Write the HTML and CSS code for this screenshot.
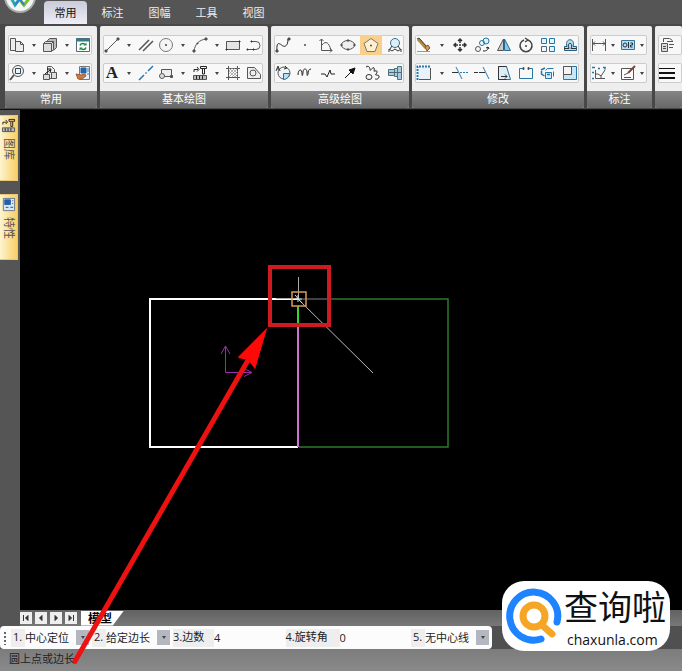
FILE: index.html
```html
<!DOCTYPE html>
<html lang="zh-CN">

<head>
    <meta charset="utf-8">
    <title>模型</title>
    <link rel="stylesheet" href="styles.css">
</head>

<body>
    <header class="menu">
        <svg class="appLogo" viewBox="0 0 40 24">
            <circle cx="20" cy="-3" r="15" fill="#f4f6f4" stroke="#aaa" stroke-width="2" />
            <path d="M10 -4l5 9 6-8" fill="none" stroke="#2aa9b5" stroke-width="3" />
            <path d="M19 -1l5 6 7-9" fill="none" stroke="#7cbb35" stroke-width="3" />
            <path d="M15 5l5-6 4 6" fill="none" stroke="#2d83c9" stroke-width="2" />
        </svg>
        <button class="menuTab active">常用</button>
        <button class="menuTab">标注</button>
        <button class="menuTab">图幅</button>
        <button class="menuTab">工具</button>
        <button class="menuTab">视图</button>
    </header>

    <div class="ribbon">
        <!-- common -->
        <section class="group common">
            <div class="tools">
                <button class="tool" aria-label="复制"><svg viewBox="0 0 16 16"><path d="M1.500 1.500h5v12h-5zM6.500 4.500h5l3 3v7h-8zM11.500 4.500v3h3" fill="#eee" /></svg></button>
                <button class="drop" aria-label="更多"></button>
                <button class="tool" aria-label="粘贴"><svg viewBox="0 0 16 16"><path d="M5.500 5.500v-2l2-2h7v9l-3 3" fill="#bbb" /><path d="M1.500 6.500l2-2h8v8l-2 2h-8zM1.500 6.500h8v8M9.500 6.500l2-2" fill="#ddd" /></svg></button>
                <button class="drop" aria-label="更多"></button>
                <button class="tool" aria-label="刷新"><svg viewBox="0 0 16 16"><path d="M1.500 1.500h13v13h-13z" fill="#fff" stroke="#567" /><path d="M1 3h14" stroke="#397b83" stroke-width="3" /><path d="M5 8.500c1-3 4-2 5-1M11 10.500c-1 3-4 2-5 1" stroke="#168b43" stroke-width="1.500" /><path d="M11.500 5.500v3h-3zM4.500 13.500v-3h3z" fill="#168b43" stroke="none" /></svg></button>
            </div>
            <div class="tools">
                <button class="tool" aria-label="缩放"><svg viewBox="0 0 16 16"><circle cx="9" cy="6" r="5.500" fill="#eef3f6" /><path d="M6.500 3.500h5v5h-5z" stroke="#345" /><path d="M5 10l-4 5" stroke-width="2" /></svg></button>
                <button class="drop" aria-label="更多"></button>
                <button class="tool" aria-label="平移"><svg viewBox="0 0 16 16"><path d="M5.500 1.500h4l3 3v9h-7z" fill="#eee" /><path d="M1.500 9.500h6v5h-6zM9.500 7.500h5v6h-5z" fill="#ddd" /><path d="M3 9l5-4M5 4l4 0-1 4" stroke="#111" /></svg></button>
                <button class="drop" aria-label="更多"></button>
                <button class="tool" aria-label="属性"><svg viewBox="0 0 16 16"><path d="M4.500 1.500h10v13h-10z" fill="#e8f1fb" stroke="#777" /><path d="M6 3h5v5H6z" fill="#2464a8" stroke="#2464a8" /><path d="M12 4h2M12 6h2M12 9h2" stroke="#4c79a8" /><path d="M1 9l5 1 4-1 1 2-4 3H3z" fill="#c57b43" stroke="#a45c32" /></svg></button>
            </div>
            <h2 class="groupName">常用</h2>
        </section>

        <!-- basic drawing -->
        <section class="group basic">
            <div class="tools">
                <button class="tool" aria-label="直线"><svg viewBox="0 0 16 16"><path d="M2 14L14 2" /><path d="M1 13h2v2H1zM13 1h2v2h-2z" fill="#444" /></svg></button>
                <button class="drop" aria-label="更多"></button>
                <button class="tool" aria-label="平行线"><svg viewBox="0 0 16 16"><path d="M1 13L11 3M5 14L15 4" stroke-width="1.500" /></svg></button>
                <button class="tool" aria-label="圆"><svg viewBox="0 0 16 16"><circle cx="8" cy="8" r="6.500" fill="#f4f4f4" stroke="#777" /><path d="M7.500 7.500h1v1h-1z" fill="#333" /></svg></button>
                <button class="drop" aria-label="更多"></button>
                <button class="tool" aria-label="圆弧"><svg viewBox="0 0 16 16"><path d="M2 14C3 7 7 3 14 2" /><path d="M1 13h2v2H1zM5 6h1v1H5zM13 1h2v2h-2z" fill="#444" /></svg></button>
                <button class="drop" aria-label="更多"></button>
                <button class="tool" aria-label="矩形"><svg viewBox="0 0 16 16"><path d="M1.500 4.500h13v8h-13z" fill="#e5e5e5" /><path d="M1 12h1v1H1zM14 4h1v1h-1z" fill="#333" stroke="#333" /></svg></button>
                <button class="tool" aria-label="多段线"><svg viewBox="0 0 16 16"><path d="M6 4.500h4a4 4 0 0 1 0 8H7M7 12.500H2" /><path d="M5 4h1v1H5zM1 12h1v1H1zM7 12h1v1H7z" fill="#333" stroke="#333" /></svg></button>
            </div>
            <div class="tools">
                <button class="tool letter" aria-label="文字">A</button>
                <button class="drop" aria-label="更多"></button>
                <button class="tool" aria-label="中心线"><svg viewBox="0 0 16 16"><path d="M1 15l5-5M7.500 8.500l1-1M10 6l5-5" stroke="#2478b5" stroke-width="1.500" /></svg></button>
                <button class="tool" aria-label="引线"><svg viewBox="0 0 16 16"><path d="M3.500 8V4.500h10v7h-7" fill="#eee" /><circle cx="4" cy="11" r="2.500" fill="#ddd" /><path d="M12.500 10.500h2v2h-2z" fill="#555" /></svg></button>
                <button class="drop" aria-label="更多"></button>
                <button class="tool" aria-label="图库"><svg viewBox="0 0 16 16"><path d="M1.500 10.500h13v4h-13z" fill="#bbb" /><path d="M4.500 11v3M7.500 11v3M10.500 11v3M2 7V4.500h4M5 2l2 2.500-2 2M8.500 1.500h6v2h-6zM10.500 4v5h2V4" stroke="#222" /></svg></button>
                <button class="drop" aria-label="更多"></button>
                <button class="tool" aria-label="剖面线"><svg viewBox="0 0 16 16"><path d="M3.500 1v14M12.500 1v14M1 3.500h14M1 12.500h14" /><path d="M4 6l3-3M4 9l6-6M4 12l9-9M7 12l6-6M10 12l3-3M4 3l9 9M7 3l6 6M4 6l6 6" stroke="#999" stroke-width=".7" /></svg></button>
                <button class="tool" aria-label="轮廓线"><svg viewBox="0 0 16 16"><path d="M1.500 2.500h7l6 7v4h-13z" fill="#eee" /><circle cx="7" cy="8" r="3" /></svg></button>
            </div>
            <h2 class="groupName">基本绘图</h2>
        </section>

        <!-- advanced drawing -->
        <section class="group advanced">
            <div class="tools">
                <button class="tool" aria-label="样条"><svg viewBox="0 0 16 16"><path d="M2 14C1 2 6 8 8 9s5 0 5-7" stroke="#222" /><path d="M1 13h2v2H1zM13 1h2v2h-2z" fill="#333" /></svg></button>
                <button class="tool" aria-label="点"><svg viewBox="0 0 16 16"><path d="M7.500 7.500h1v1h-1z" fill="#777" /></svg></button>
                <button class="tool" aria-label="公式曲线"><svg viewBox="0 0 16 16"><path d="M3.500 2v11.500H14M1.500 4l2-2 2 2M12 11.500l2 2-2 2M4 8c4-5 7-2 9 5" /></svg></button>
                <button class="tool" aria-label="椭圆"><svg viewBox="0 0 16 16"><ellipse cx="8" cy="8" rx="6.500" ry="4.500" fill="#eee" /><path d="M1 7h1v2H1zM14 7h1v2h-1zM7 3h2v1H7zM7 12h2v1H7z" fill="#333" /></svg></button>
                <button class="tool selected" aria-label="正多边形"><svg viewBox="0 0 16 16"><path d="M8 1.500l7 5-3 8H4l-3-8z" fill="#fff0cf" stroke="#777" /><path d="M7.500 8h1v1h-1z" fill="#333" /></svg></button>
                <button class="tool" aria-label="局部放大"><svg viewBox="0 0 16 16"><circle cx="8" cy="6" r="4.500" fill="#dceef8" stroke="#3d7189" /><path d="M5 9l-2 3M11 9l2 3M2 15v-3l3 2 3-2 3 2 3-2v3" stroke="#333" /></svg></button>
            </div>
            <div class="tools">
                <button class="tool" aria-label="圆形"><svg viewBox="0 0 16 16"><circle cx="9" cy="8" r="6" fill="#eef6fa" /><path d="M8.500 8.500h6c0 3-3 6-6 6z" fill="#b7dff4" stroke="#256b96" /><path d="M1 6l2-5 2 5M2 4h2M10 1l2 2-3 1" stroke="#333" /></svg></button>
                <button class="tool" aria-label="波浪线"><svg viewBox="0 0 16 16"><path d="M1 10c0-6 4-7 4-1 0 3 1 1 1-2 0-4 4-4 4 0 0 3 0 5 1 2 0-3 1-5 3-5" stroke="#222" /></svg></button>
                <button class="tool" aria-label="双折线"><svg viewBox="0 0 16 16"><path d="M1 9h4l2 3 3-7 1 4h4" stroke="#222" /></svg></button>
                <button class="tool" aria-label="箭头"><svg viewBox="0 0 16 16"><path d="M3 13l6-6" stroke="#111" /><path d="M13 3l-2 6-4-4z" fill="#111" stroke="#111" /></svg></button>
                <button class="tool" aria-label="齿轮"><svg viewBox="0 0 16 16"><path d="M1 2c3-2 4 1 4 3s3-4 4-2-1 4 1 3 3 1 1 3 4 0 3 3-3 2-4 2" stroke="#222" /><ellipse cx="4" cy="12" rx="3" ry="2.500" stroke="#333" /></svg></button>
                <button class="tool" aria-label="轴"><svg viewBox="0 0 16 16"><path d="M1.500 4.500h6v6h-6zM7.500 3.500h3v8h-3zM10.500 1.500h4v13h-4z" fill="#a7cbe0" stroke="#477" /><path d="M1 7.500h14" stroke="#567" /></svg></button>
            </div>
            <h2 class="groupName">高级绘图</h2>
        </section>

        <!-- modify -->
        <section class="group modify">
            <div class="tools">
                <button class="tool" aria-label="删除"><svg viewBox="0 0 16 16"><path d="M2 2l8 9" stroke="#b38b35" stroke-width="3" /><path d="M1 2l2-1 8 9" stroke="#333" /><path d="M9 10l3-2 2 3-3 3z" fill="#d89551" stroke="#855629" /><path d="M1 14.500h13" stroke="#999" /></svg></button>
                <button class="drop" aria-label="更多"></button>
                <button class="tool" aria-label="移动"><svg viewBox="0 0 16 16"><path d="M8 2v4M8 10v4M2 8h4M10 8h4M6 4l2-2 2 2M6 12l2 2 2-2M4 6L2 8l2 2M12 6l2 2-2 2M7 8h2" stroke="#333" stroke-width="1.500" /></svg></button>
                <button class="tool" aria-label="平移复制"><svg viewBox="0 0 16 16"><circle cx="12" cy="4" r="3" fill="#dff0fa" stroke="#2676a6" /><circle cx="8" cy="6" r="2.500" stroke="#2676a6" /><circle cx="4" cy="12" r="2.500" /><path d="M9 14c4 0 5-1 5-4M12 11l2-1 1 2" stroke="#222" /></svg></button>
                <button class="tool" aria-label="镜像"><svg viewBox="0 0 16 16"><path d="M7.500 2v11.500h-6z" fill="#ccc" /><path d="M8.500 2v11.500h6z" fill="#91c2df" stroke="#286d98" /></svg></button>
                <button class="tool" aria-label="旋转"><svg viewBox="0 0 16 16"><path d="M10 3a6 6 0 1 1-4 0M7 1l3 2-3 2" stroke="#444" stroke-width="1.500" /><path d="M7.500 8.500h1v1h-1z" fill="#222" /></svg></button>
                <button class="tool" aria-label="阵列"><svg viewBox="0 0 16 16"><path d="M1.500 1.500h5v5h-5zM9.500 1.500h5v5h-5zM9.500 9.500h5v5h-5z" fill="#e4f4fc" stroke="#2676a6" /><path d="M1.500 9.500h5v5h-5z" stroke="#496778" /></svg></button>
                <button class="tool" aria-label="偏移"><svg viewBox="0 0 16 16"><path d="M2.500 13.500h12v-4H11c3-9-9-9-6 0H2.500z" fill="#b9dff3" stroke="#245f85" /><path d="M2 11.500h5c-3-7 5-7 2 0h5" stroke="#333" /></svg></button>
            </div>
            <div class="tools">
                <button class="tool" aria-label="拉伸"><svg viewBox="0 0 16 16"><path d="M1.500 1.500h13v13h-13z" fill="#e8f2f8" stroke="none" /><path d="M1.500 15V1.500H15" stroke="#257ab2" stroke-width="2" stroke-dasharray="2 1" /><path d="M14.500 3v11.500H3" /></svg></button>
                <button class="drop" aria-label="更多"></button>
                <button class="tool" aria-label="裁剪"><svg viewBox="0 0 16 16"><path d="M0 7.500h6" stroke="#333" /><path d="M4 2l6 12M8 7.500h2M11 7.500h2M14 7.500h2" stroke="#257ab2" /></svg></button>
                <button class="tool" aria-label="延伸"><svg viewBox="0 0 16 16"><path d="M0 7.500h4M5 7.500h6" stroke="#333" /><path d="M9 2l6 12" stroke="#257ab2" /></svg></button>
                <button class="tool" aria-label="拉长"><svg viewBox="0 0 16 16"><path d="M2.500 1.500h8l4 13h-12z" fill="#ddedf5" stroke="#276d98" /><path d="M10.500 1.500h-8v13h8M5 11.500h6M9 9.500l2 2-2 2" stroke="#333" /></svg></button>
                <button class="tool" aria-label="打断"><svg viewBox="0 0 16 16"><path d="M5 3.500H1.500v10h13v-10H11" stroke="#2676a6" /><path d="M5 2.500h1v2H5zM10 2.500h1v2h-1z" fill="#333" /></svg></button>
                <button class="tool" aria-label="分解"><svg viewBox="0 0 16 16"><path d="M5.500 7.500h6v6h-6zM5.500 5.500l2-2h6M13.500 6.500v5" fill="#d5eefa" stroke="#2676a6" /><path d="M1 5l4-2M1.500 6v3l3 2M7 9.500h3" stroke="#2676a6" stroke-width="1.500" /></svg></button>
                <button class="tool" aria-label="比例缩放"><svg viewBox="0 0 16 16"><path d="M1.500 1.500h13v13h-13z" fill="#c8e7f6" stroke="#2676a6" /><path d="M1.500 1.500h8v8h-8z" fill="#f4f4f4" /></svg></button>
            </div>
            <h2 class="groupName">修改</h2>
        </section>

        <!-- dimension -->
        <section class="group dimension">
            <div class="tools">
                <button class="tool" aria-label="尺寸标注"><svg viewBox="0 0 16 16"><path d="M1.500 2v12M14.500 2v12M2 6.500h12M4 4.500l-2 2 2 2M12 4.500l2 2-2 2" /></svg></button>
                <button class="drop" aria-label="更多"></button>
                <button class="tool" aria-label="形位公差"><svg viewBox="0 0 16 16"><path d="M1.500 3.500h13v9h-13z" fill="#b8dcef" stroke="#357397" /><circle cx="5" cy="8" r="2" stroke="#234" /><path d="M8.500 5v6M10.500 6h2v2h-2v2h2" stroke="#234" /></svg></button>
                <button class="drop" aria-label="更多"></button>
            </div>
            <div class="tools">
                <button class="tool" aria-label="坐标标注"><svg viewBox="0 0 16 16"><path d="M4.500 5v8.500H14M5 9h2l3 2v3M10 11l4-6" /><path d="M1 2.500h3M1 7.500h2M1 13.500h2M7 3.500h2M12 2.500h2v2" stroke="#2676a6" stroke-width="1.500" /></svg></button>
                <button class="drop" aria-label="更多"></button>
                <button class="tool" aria-label="标注编辑"><svg viewBox="0 0 16 16"><path d="M1.500 3.500h12v11h-12z" fill="#fff" stroke="#555" /><path d="M15 1L8 8" stroke="#7b4636" stroke-width="2" /><path d="M4 10l4-2M4 12.500h7" stroke="#555" /></svg></button>
                <button class="drop" aria-label="更多"></button>
            </div>
            <h2 class="groupName">标注</h2>
        </section>

        <!-- properties, runs off the window -->
        <section class="group more">
            <div class="tools">
                <button class="tool" aria-label="图层"><svg viewBox="0 0 16 16"><path d="M2.500 6.500h6v8h-6zM4 9.500h3M4 11.500h3" fill="#ddd" /><path d="M4.500 5V1.500h6l3 2M8 4.500h6M10 7.500h5M10 10.500h4" /></svg></button>
            </div>
            <div class="tools">
                <button class="tool" aria-label="线宽"><svg viewBox="0 0 16 16"><path d="M0 3.500h16" stroke="#111" /><path d="M0 8h16M0 13h16" stroke="#111" stroke-width="2" /></svg></button>
            </div>
            <h2 class="groupName"></h2>
        </section>
    </div>

    <main class="work">
        <aside class="side">
            <button class="sideTab">
                <svg viewBox="0 0 16 16"><path d="M1.500 10.500h13v4h-13z" fill="#bbb" /><path d="M4.500 11v3M7.500 11v3M10.500 11v3M2 7V4.500h4M5 2l2 2.500-2 2M8.500 1.500h6v2h-6zM10.500 4v5h2V4" stroke="#222" /></svg>
                <span>图库</span>
            </button>
            <button class="sideTab">
                <svg viewBox="0 0 16 16"><path d="M2.500 1.500h12v13h-12z" fill="#d9e8f5" stroke="#678" /><path d="M4 3h6v5H4z" fill="#245eaa" stroke="#245eaa" /><path d="M12 4h1M12 7h1M5 11h3M10 11h3" stroke="#346" /></svg>
                <span>特性</span>
            </button>
        </aside>
        <div class="sheet">
            <div class="canvas">
                <svg class="drawing" viewBox="0 0 662 500" width="662" height="500">
                    <path d="M279 189h149v148H279" stroke="#2c7a2c" stroke-width="1.500" />
                    <path d="M279 189H130v148h148" stroke="#fff" stroke-width="2" />
                    <path d="M278 210v127" stroke="#d070d0" stroke-width="2" />
                    <path d="M278 196v17" stroke="#35d535" stroke-width="2" />
                    <path d="M282 189h27" stroke="#64246e" />
                    <path d="M278 189l75 74" stroke="#bbb" />
                    <path d="M278.500 167v22M256 188.500h22" stroke="#aaa" />
                    <!-- snap box -->
                    <path d="M272 182h14v14h-14z" stroke="#d79a55" stroke-width="1.500" />
                    <path d="M275 185l7 8M275 189h7M278 185v7" stroke="#d8e1e5" />
                    <!-- axis -->
                    <path d="M205.500 236v26.500H231M201 244l4.500-8 4.500 8M224 258.500l8 4-8 4" stroke="#9b2ba8" />
                </svg>
            </div>
            <nav class="pages">
                <button class="pageBtn" aria-label="第一页"><svg viewBox="0 0 12 12"><path d="M3.500 3v6" /><path d="M8 3.500v5L5.500 6z" fill="#333" /></svg></button>
                <button class="pageBtn" aria-label="上一页"><svg viewBox="0 0 12 12"><path d="M7 3.500v5L4.500 6z" fill="#333" /></svg></button>
                <button class="pageBtn" aria-label="下一页"><svg viewBox="0 0 12 12"><path d="M5 3.500v5L7.500 6z" fill="#333" /></svg></button>
                <button class="pageBtn" aria-label="最后一页"><svg viewBox="0 0 12 12"><path d="M8.500 3v6" /><path d="M4 3.500v5L6.500 6z" fill="#333" /></svg></button>
                <button class="pageTab">模型</button>
            </nav>
        </div>
    </main>

    <div class="optionRow">
        <form class="options">
            <span class="grip"></span>
            <label class="num" for="locate">1.</label>
            <span class="pick">
                <select id="locate"><option>中心定位</option></select>
                <span class="pickArrow"></span>
            </span>
            <label class="num" for="given">2.</label>
            <span class="pick">
                <select id="given"><option>给定边长</option></select>
                <span class="pickArrow"></span>
            </span>
            <label class="sides" for="sides">3.边数</label>
            <input class="field" id="sides" type="text" value="4">
            <label class="angle" for="angle">4.旋转角</label>
            <input class="field" id="angle" type="text" value="0">
            <label class="num" for="center">5.</label>
            <span class="pick">
                <select id="center"><option>无中心线</option></select>
                <span class="pickArrow"></span>
            </span>
        </form>
    </div>

    <footer class="status">圆上点或边长</footer>

    <!-- red box and arrow over the whole window -->
    <svg class="marks" viewBox="0 0 682 671" width="682" height="671">
        <path d="M270 267h59v58h-59z" fill="none" stroke="#cf1a20" stroke-width="4" />
        <path d="M74 663L251 355" stroke="#ee1111" stroke-width="5" />
        <path d="M267 328l-12 41-7-9-10-2z" fill="#ff0808" />
        <path d="M267 328l-29 29 11 0 6 12z" fill="#ff0808" />
    </svg>

    <div class="brand">
        <svg class="brandLogo" viewBox="0 0 56 56">
            <path d="M35 51A24 24 0 1 1 51 34" fill="none" stroke="#1d83ff" stroke-width="7" stroke-linecap="round" />
            <circle cx="28" cy="28" r="11" fill="none" stroke="#f6a626" stroke-width="7" />
            <path d="M37 38l9 8" stroke="#f6a626" stroke-width="7" stroke-linecap="round" />
        </svg>
        <div class="brandText">
            <span class="brandName">查询啦</span>
            <span class="brandSite">chaxunla.com</span>
        </div>
    </div>
</body>

</html>
```
FILE: styles.css
```css
* {
    box-sizing: border-box;
}

body {
    margin: 0;
    min-height: 100vh;
    display: flex;
    flex-direction: column;
    position: relative;
    overflow: hidden;
    background: #555;
    font-family: "Open Sans", "Noto Sans CJK SC", sans-serif;
    font-size: 11px;
    line-height: 16px;
    color: #222;
}

button, input, select {
    font: inherit;
    color: inherit;
    margin: 0;
    padding: 0;
    border: 0;
    background: none;
}

svg {
    display: block;
    flex: none;
}

/* top tabs */
.menu {
    height: 24px;
    display: flex;
    align-items: flex-end;
    gap: 4px;
    background: #555;
}

.appLogo {
    width: 40px;
    height: 24px;
}

.menuTab {
    width: 43px;
    height: 23px;
    color: #eee;
}

.menuTab.active {
    color: #111;
    background: linear-gradient(#c9cbda, #edeef6);
    border-radius: 4px 4px 0 0;
}

/* ribbon */
.ribbon {
    display: flex;
    gap: 3px;
    padding: 2px 0 1px 5px;
    background: #484848;
    border-bottom: 1px solid #111;
    overflow: hidden;
}

.group {
    flex: none;
    display: flex;
    flex-direction: column;
    gap: 8px;
    padding-top: 9px;
    background: #eee;
    border-radius: 2px;
    overflow: hidden;
}

.common {
    width: 92px;
}

.basic {
    width: 168px;
}

.advanced {
    width: 138px;
}

.modify {
    width: 172px;
}

.dimension {
    width: 65px;
}

.more {
    flex: 1 0 27px;
}

.tools {
    height: 20px;
    margin: 0 5px 0 3px;
    display: flex;
    align-items: center;
    justify-content: space-between;
    background: #f8f8f8;
    border-radius: 2px;
    box-shadow: inset 0 0 0 1px #ccc;
}

.more .tools {
    margin-right: 0;
}

.tool {
    flex: none;
    width: 18px;
    height: 20px;
    display: flex;
    align-items: center;
    justify-content: center;
}

.tool svg {
    width: 16px;
    height: 16px;
}

.tool svg, .sideTab svg {
    fill: none;
    stroke: #555;
}

.tool.selected {
    width: 22px;
    background: #f9cf8c;
}

.letter {
    font-family: "Liberation Serif", serif;
    font-size: 17px;
    font-weight: bold;
}

.drop {
    flex: none;
    width: 10px;
    height: 18px;
}

.drop::before, .pickArrow::before {
    content: "";
    display: block;
    width: 0;
    margin: auto;
    border: 2px solid transparent;
    border-top: 3px solid #444;
    border-bottom: 0;
}

.groupName {
    height: 17px;
    margin: 0;
    font-size: 11px;
    font-weight: normal;
    line-height: 16px;
    text-align: center;
    color: #fff;
    background: linear-gradient(#858585, #686868);
}

/* drawing area */
.work {
    flex: 1;
    display: flex;
}

.side {
    flex: none;
    width: 20px;
    display: flex;
    flex-direction: column;
    gap: 13px;
    padding: 5px 2px 0 0;
}

.sideTab {
    height: 66px;
    display: flex;
    flex-direction: column;
    align-items: center;
    gap: 5px;
    padding-top: 2px;
    color: #555;
    background: linear-gradient(to right, #fdf4cf, #f8cf65);
    border: 1px solid #e9c878;
    border-left: 0;
}

.sideTab svg {
    width: 15px;
    height: 15px;
}

.sideTab span {
    writing-mode: vertical-rl;
    text-orientation: sideways;
}

.sheet {
    flex: 1;
    min-width: 0;
    display: flex;
    flex-direction: column;
}

.canvas {
    flex: 1;
    background: #000;
    overflow: hidden;
}

.drawing {
    fill: none;
}

.pages {
    height: 16px;
    display: flex;
    align-items: center;
    gap: 3px;
    background: linear-gradient(#626262, #777);
}

.pageBtn {
    width: 12px;
    height: 12px;
    background: #eee;
}

.pageBtn svg {
    width: 12px;
    height: 12px;
    stroke: #333;
}

.pageTab {
    width: 43px;
    height: 15px;
    margin-left: 1px;
    padding-right: 5px;
    font-size: 12px;
    font-weight: bold;
    line-height: 15px;
    color: #000;
    background: #fff;
    clip-path: polygon(0 0, 100% 0, 74% 100%, 0 100%);
}

/* polygon options */
.optionRow {
    display: flex;
    background: #505050;
}

.options {
    width: 492px;
    height: 23px;
    display: flex;
    align-items: center;
    background: #fcfcfc;
    border-radius: 4px;
    overflow: hidden;
}

.grip {
    width: 11px;
    height: 14px;
    background: radial-gradient(circle, #666 1px, transparent 1px) 3px 0 / 4px 4px repeat-y;
}

.num {
    width: 14px;
    padding-left: 2px;
}

.options label {
    height: 18px;
    flex: none;
    background: #eee;
}

.pick {
    flex: none;
    width: 64px;
    display: grid;
    grid-template-columns: 1fr 13px;
    align-items: center;
    margin-right: 3px;
}

.pick select {
    appearance: none;
    grid-area: 1 / 1 / 2 / 3;
    height: 18px;
}

.pickArrow {
    grid-area: 1 / 2;
    height: 15px;
    padding-top: 6px;
    background: #b4b6c0;
    pointer-events: none;
}

.sides {
    width: 41px;
}

.angle {
    width: 54px;
}

.field {
    flex: 1;
    min-width: 0;
    height: 18px;
}

.status {
    height: 22px;
    padding: 2px 9px;
    background: linear-gradient(#7c7c7c, #8a8a8a);
}

/* overlays */
.marks {
    position: absolute;
    left: 0;
    top: 0;
    pointer-events: none;
}

.brand {
    position: absolute;
    right: 12px;
    bottom: 20px;
    width: 168px;
    height: 70px;
    display: flex;
    align-items: center;
    gap: 2px;
    padding-left: 4px;
    color: #111;
    background: #fff;
    border-radius: 22px;
    overflow: hidden;
}

.brandLogo {
    width: 56px;
    height: 56px;
}

.brandText {
    flex: none;
    display: flex;
    flex-direction: column;
}

.brandName {
    font-size: 34px;
    line-height: 48px;
}

.brandSite {
    padding-left: 3px;
    font-size: 14px;
    line-height: 18px;
}
```
